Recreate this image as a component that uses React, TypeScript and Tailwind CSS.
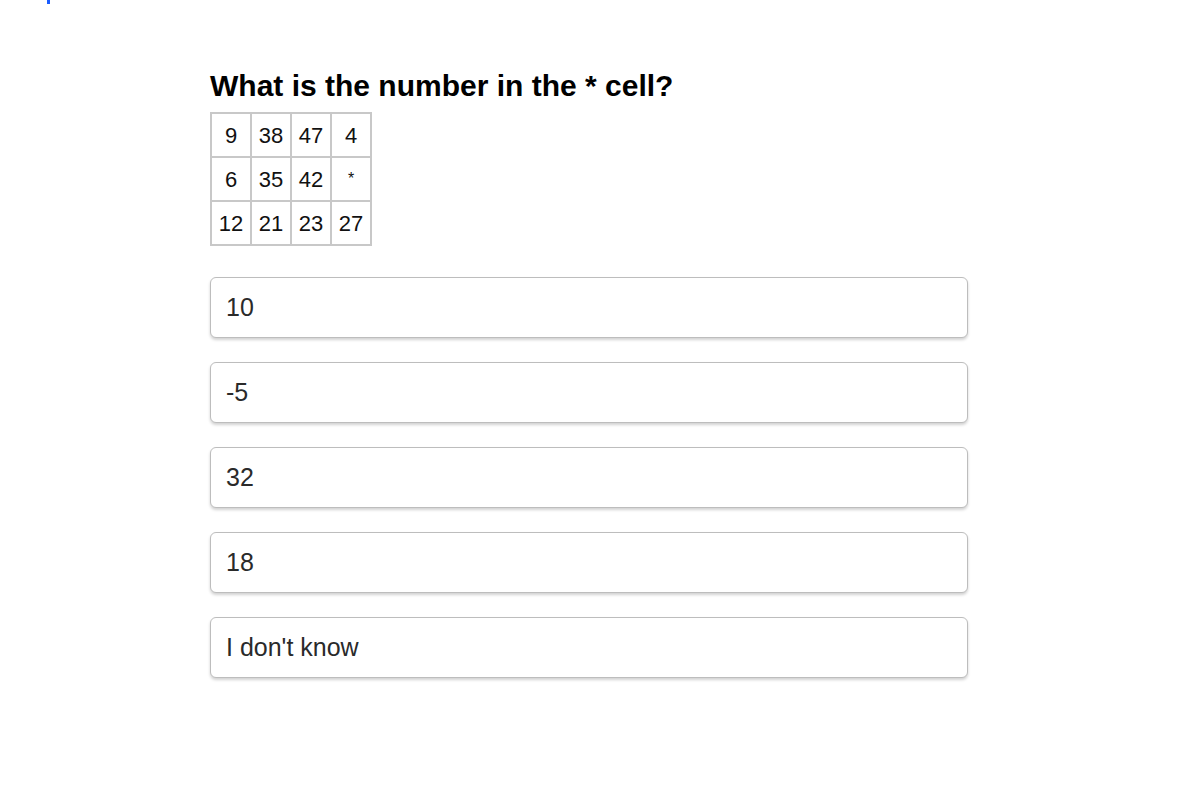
import React from "react";

const rows = [
  ["9", "38", "47", "4"],
  ["6", "35", "42", "*"],
  ["12", "21", "23", "27"],
];

const options = ["10", "-5", "32", "18", "I don't know"];

export default function App() {
  return (
    <div className="min-h-[810px] bg-white" style={{ fontFamily: '"Liberation Sans", Arial, sans-serif' }}>
      <div className="ml-[47px] h-[4px] w-[3px] bg-[#1a5cff]" />
      <div className="ml-[210px] w-[758px] pt-[65px]">
        <h1 className="text-[30px] font-bold leading-[34px] text-black">What is the number in the * cell?</h1>
        <table className="mt-[9px] border-collapse">
          <tbody>
            {rows.map((r, i) => (
              <tr key={i}>
                {r.map((c, j) => (
                  <td
                    key={j}
                    className={`h-[44px] w-[40px] border-2 border-[#c8c8c8] p-0 text-center align-middle text-[#111] ${c === "*" ? "text-[16px]" : "text-[22px]"}`}
                  >
                    {c}
                  </td>
                ))}
              </tr>
            ))}
          </tbody>
        </table>
        <div className="mt-[31px] flex flex-col gap-[24px]">
          {options.map((o) => (
            <div
              key={o}
              className="flex h-[61px] items-center rounded-[6px] border border-[#bdbdbd] bg-white pl-[15px] text-[25px] text-[#2a2a2a] shadow-[0_2px_3px_rgba(0,0,0,0.18)]"
            >
              {o}
            </div>
          ))}
        </div>
      </div>
    </div>
  );
}
